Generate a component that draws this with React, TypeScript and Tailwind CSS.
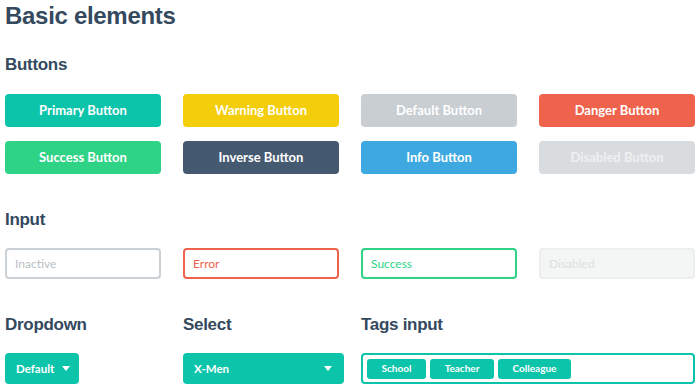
import React from "react";

const heading = "font-['Liberation_Sans',Arial,sans-serif] font-bold text-[#34495e]";
const lato = "font-['Lato','Liberation_Sans',sans-serif]";

const buttons = [
  { label: "Primary Button", cls: "bg-[#0cc4aa] text-white" },
  { label: "Warning Button", cls: "bg-[#f4cd0b] text-white" },
  { label: "Default Button", cls: "bg-[#c9ced3] text-white" },
  { label: "Danger Button", cls: "bg-[#ef634d] text-white" },
  { label: "Success Button", cls: "bg-[#2fd386] text-white" },
  { label: "Inverse Button", cls: "bg-[#455a70] text-white" },
  { label: "Info Button", cls: "bg-[#3ea9e1] text-white" },
  { label: "Disabled Button", cls: "bg-[#d9dcdf] text-[#eef0f1]" },
];

const inputs = [
  { text: "Inactive", cls: "border-[#cbd0d4] text-[#b9c0c5] bg-white" },
  { text: "Error", cls: "border-[#ef634d] text-[#ef634d] bg-white" },
  { text: "Success", cls: "border-[#2fd386] text-[#2fd386] bg-white" },
  { text: "Disabled", cls: "border-[#eceeef] text-[#dcdfe1] bg-[#f4f5f5]" },
];

function Caret() {
  return (
    <svg width="8" height="5" viewBox="0 0 8 5" className="shrink-0">
      <path d="M0 0 H8 L4 5 Z" fill="white" />
    </svg>
  );
}

export default function App() {
  return (
    <div className="w-[700px] h-[391px] overflow-hidden bg-white px-[5px]">
      <h1 className={`${heading} text-[24px] leading-[28px] mt-[2px] tracking-[-0.3px]`}>Basic elements</h1>

      <h2 className={`${heading} text-[17px] leading-[20px] mt-[25px] tracking-[-0.3px]`}>Buttons</h2>
      <div className="grid grid-cols-4 gap-x-[22px] gap-y-[14px] mt-[19px]">
        {buttons.map((b) => (
          <div
            key={b.label}
            className={`${b.cls} ${lato} h-[33px] rounded-[4px] flex items-center justify-center text-[13px] font-bold`}
          >
            {b.label}
          </div>
        ))}
      </div>

      <h2 className={`${heading} text-[17px] leading-[20px] mt-[36px] tracking-[-0.3px]`}>Input</h2>
      <div className="grid grid-cols-4 gap-x-[22px] mt-[18px]">
        {inputs.map((i) => (
          <div
            key={i.text}
            className={`${i.cls} ${lato} h-[31px] rounded-[4px] border-2 flex items-center px-[8px] text-[12px]`}
          >
            {i.text}
          </div>
        ))}
      </div>

      <div className="grid grid-cols-[156px_156px_334px] gap-x-[22px] mt-[36px]">
        <div>
          <h2 className={`${heading} text-[17px] leading-[20px] tracking-[-0.3px]`}>Dropdown</h2>
          <div className={`${lato} mt-[18px] w-[74px] h-[31px] rounded-[4px] bg-[#0cc4aa] text-white text-[11.5px] font-bold flex items-center gap-[8px] pl-[11px]`}>
            Default
            <Caret />
          </div>
        </div>
        <div>
          <h2 className={`${heading} text-[17px] leading-[20px] tracking-[-0.3px]`}>Select</h2>
          <div className={`${lato} mt-[18px] w-[161px] h-[31px] rounded-[4px] bg-[#0cc4aa] text-white text-[11.5px] font-bold flex items-center justify-between pl-[11px] pr-[12px]`}>
            X-Men
            <Caret />
          </div>
        </div>
        <div>
          <h2 className={`${heading} text-[17px] leading-[20px] tracking-[-0.3px]`}>Tags input</h2>
          <div className="mt-[18px] h-[31px] rounded-[4px] border-2 border-[#0cc4aa] bg-white flex items-center gap-[4px] pl-[4px]">
            {[
              ["School", "w-[59px]"],
              ["Teacher", "w-[64px]"],
              ["Colleague", "w-[73px]"],
            ].map(([t, w]) => (
              <span
                key={t}
                className={`${lato} ${w} h-[20px] rounded-[3px] bg-[#0cc4aa] text-white text-[10px] font-bold flex items-center justify-center`}
              >
                {t}
              </span>
            ))}
          </div>
        </div>
      </div>
    </div>
  );
}
